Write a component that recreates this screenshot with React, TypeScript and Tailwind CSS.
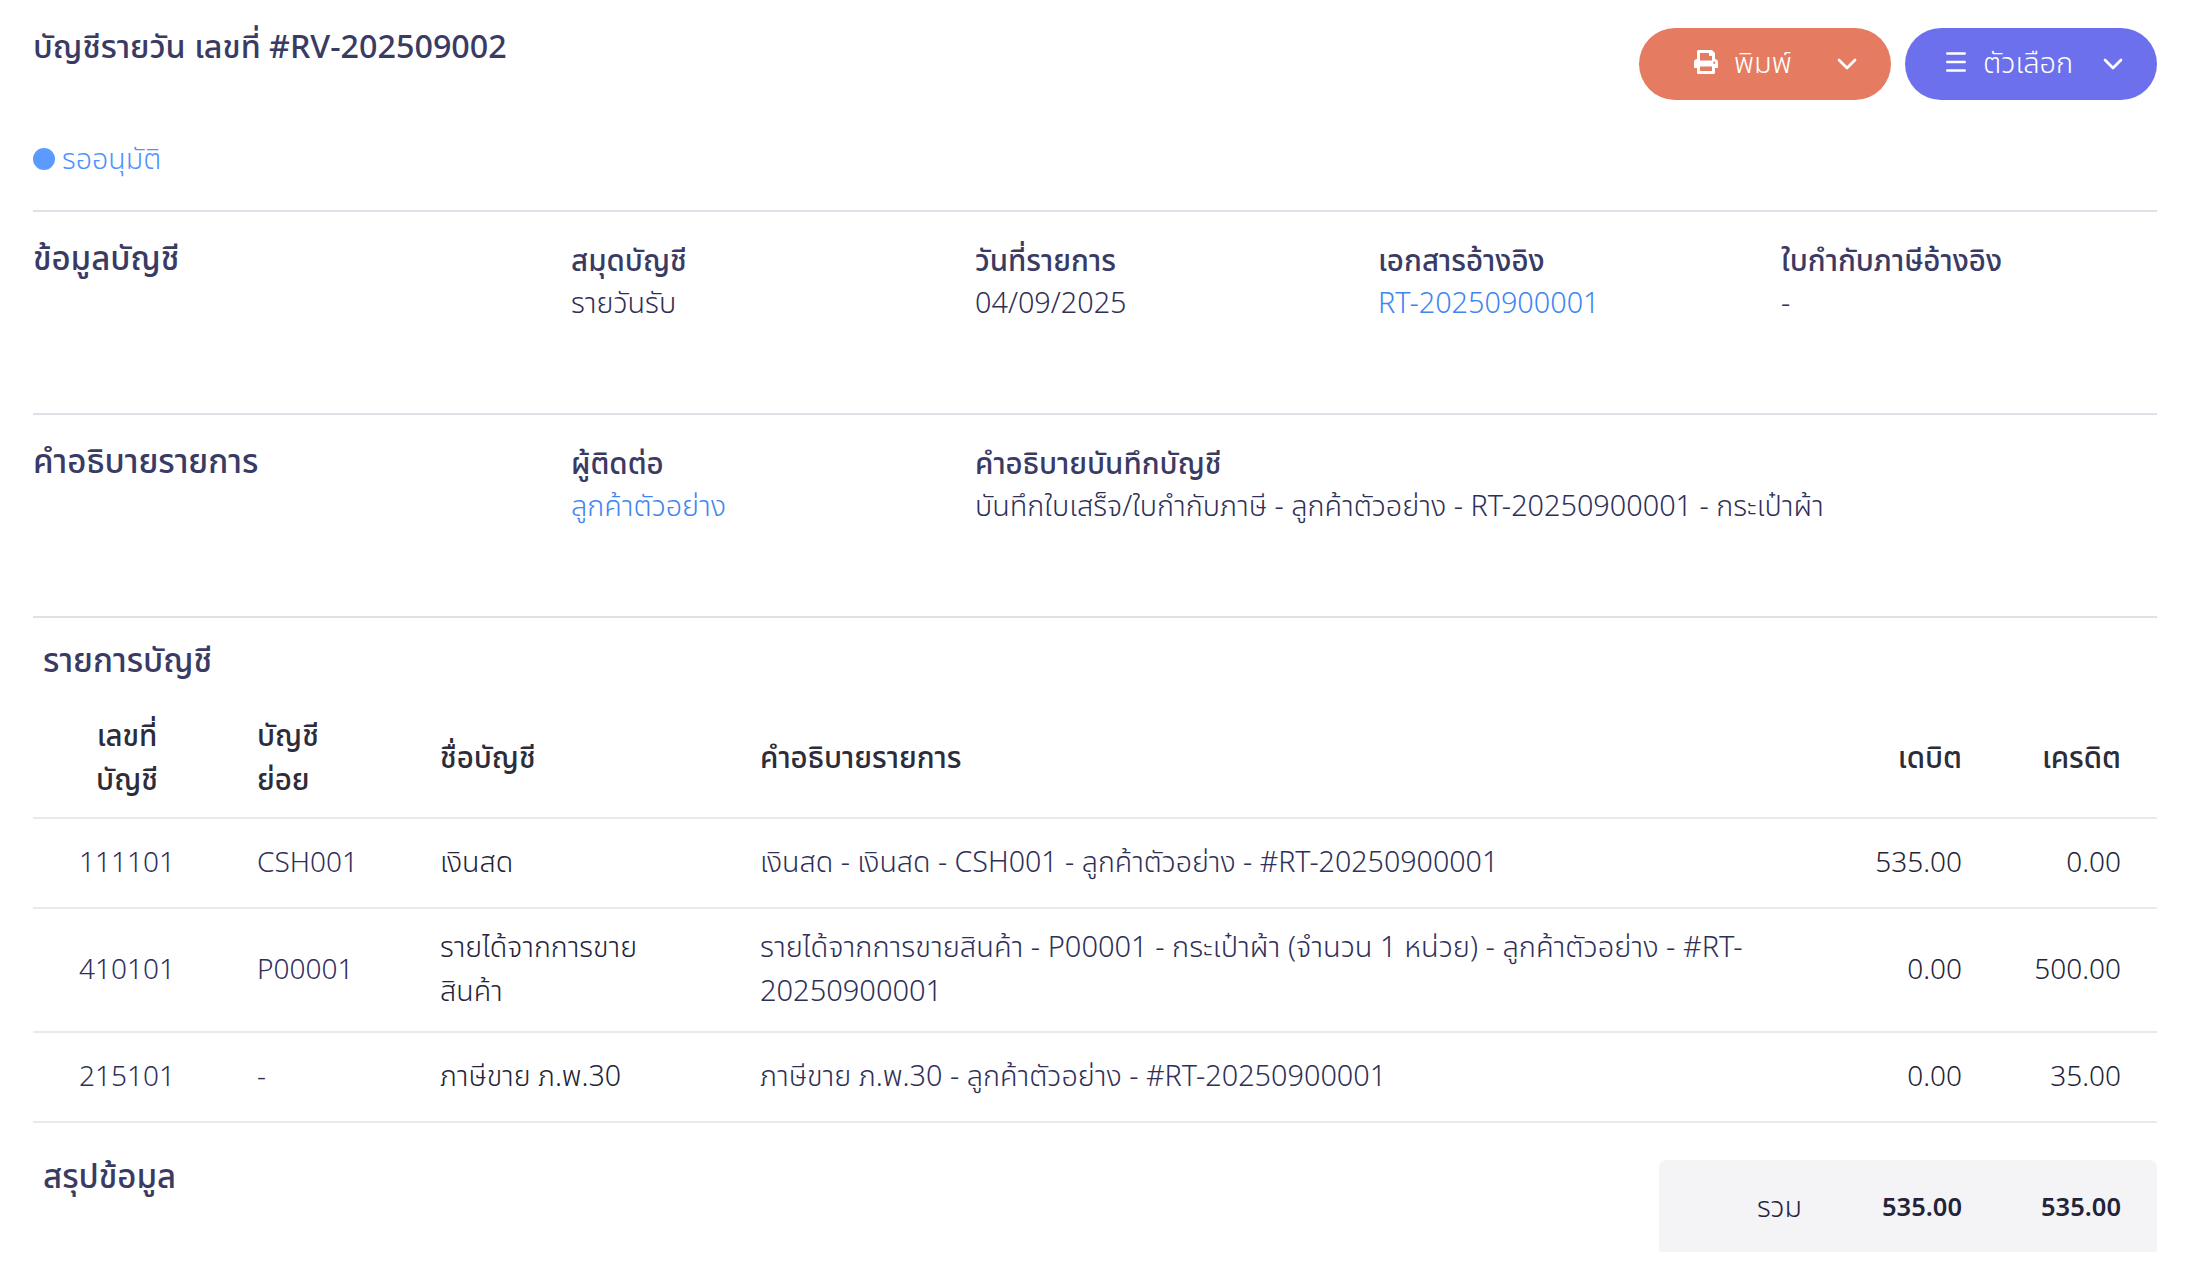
import React from "react";
import { ChevronDown } from "lucide-react";
import { FaPrint } from "react-icons/fa";

const rows = [
  { no: "111101", sub: "CSH001", name: "เงินสด", desc: "เงินสด - เงินสด - CSH001 - ลูกค้าตัวอย่าง - #RT-20250900001", size: "text-[28.6px]", dr: "535.00", cr: "0.00" },
  { no: "410101", sub: "P00001", name: "รายได้จากการขายสินค้า", desc: "รายได้จากการขายสินค้า - P00001 - กระเป๋าผ้า (จำนวน 1 หน่วย) - ลูกค้าตัวอย่าง - #RT-20250900001", size: "text-[29px]", dr: "0.00", cr: "500.00" },
  { no: "215101", sub: "-", name: "ภาษีขาย ภ.พ.30", desc: "ภาษีขาย ภ.พ.30 - ลูกค้าตัวอย่าง - #RT-20250900001", size: "text-[28.8px]", dr: "0.00", cr: "35.00" },
];

function Field({ label, value, link }: { label: string; value: string; link?: boolean }) {
  return (
    <div>
      <div className="text-[29.5px] leading-[42px] font-medium text-[#3a3b64] pt-[1px]">{label}</div>
      <div className={`text-[28.8px] leading-[42px] font-light ${link ? "text-[#3f86f0]" : "text-[#2f3058]"}`}>{value}</div>
    </div>
  );
}

export default function App() {
  return (
    <div className="bg-white min-h-[1278px] pl-[33px] pr-[31px] pt-[28px] font-['Noto_Sans','Noto_Sans_Thai',sans-serif] text-[#3a3b64]">
      <header className="flex justify-between h-[103px]">
        <h1 className="text-[32.3px] leading-[34px] font-medium">บัญชีรายวัน เลขที่ #RV-202509002</h1>
        <div className="flex gap-[14px]">
          <button className="w-[252px] h-[72px] rounded-[36px] bg-[#e57c61] text-white flex items-center justify-between pl-[55px] pr-[28px]">
            <span className="flex items-center gap-[16px] text-[29px] font-light mb-[4px]"><FaPrint className="text-[24px]" />พิมพ์</span>
            <ChevronDown size={32} strokeWidth={2} />
          </button>
          <button className="w-[252px] h-[72px] rounded-[36px] bg-[#6c70ec] text-white flex items-center justify-between pl-[41px] pr-[28px]">
            <span className="flex items-center gap-[17px] text-[29px] font-light mb-[4px]">
              <svg width="20" height="20" viewBox="0 0 20 20" fill="none" stroke="currentColor" strokeWidth="2.6" strokeLinecap="round">
                <path d="M1.3 1.5h17.4M1.3 10h17.4M1.3 18.5h17.4" />
              </svg>
              ตัวเลือก
            </span>
            <ChevronDown size={32} strokeWidth={2} />
          </button>
        </div>
      </header>

      <div className="flex items-center gap-[7px] h-[54px] mb-[25px] text-[28.6px] font-light text-[#4f92ff]">
        <span className="w-[22px] h-[22px] rounded-full bg-[#5b9bff] mt-[1px]" />
        รออนุมัติ
      </div>

      <section className="border-t-2 border-[#e0e0e8] h-[203px] grid grid-cols-[538px_404px_403px_403px_1fr] pt-[26px]">
        <h2 className="text-[33px] leading-[44px] font-medium -mt-[2px]">ข้อมูลบัญชี</h2>
        <Field label="สมุดบัญชี" value="รายวันรับ" />
        <Field label="วันที่รายการ" value="04/09/2025" />
        <Field label="เอกสารอ้างอิง" value="RT-20250900001" link />
        <Field label="ใบกำกับภาษีอ้างอิง" value="-" />
      </section>

      <section className="border-t-2 border-[#e0e0e8] h-[203px] grid grid-cols-[538px_404px_1fr] pt-[26px]">
        <h2 className="text-[33px] leading-[44px] font-medium -mt-[2px]">คำอธิบายรายการ</h2>
        <Field label="ผู้ติดต่อ" value="ลูกค้าตัวอย่าง" link />
        <Field label="คำอธิบายบันทึกบัญชี" value="บันทึกใบเสร็จ/ใบกำกับภาษี - ลูกค้าตัวอย่าง - RT-20250900001 - กระเป๋าผ้า" />
      </section>

      <section className="border-t-2 border-[#e0e0e8]">
        <h2 className="text-[33px] leading-[44px] font-medium pl-[10px] pt-[20px]">รายการบัญชี</h2>
        <table className="w-full table-fixed border-collapse text-[28.6px] leading-[43.5px] font-light text-[#2f3058] mt-[14px]">
          <colgroup>
            <col className="w-[188px]" />
            <col className="w-[183px]" />
            <col className="w-[320px]" />
            <col />
            <col className="w-[160px]" />
            <col className="w-[159px]" />
          </colgroup>
          <thead>
            <tr className="border-b-2 border-[#e8e8ee] text-[#2c2c3a] h-[122px]">
              <th className="font-medium text-[29.5px] text-center px-[36px]">เลขที่<br />บัญชี</th>
              <th className="font-medium text-[29.5px] text-left pl-[36px]">บัญชี<br />ย่อย</th>
              <th className="font-medium text-[29.5px] text-left pl-[36px]">ชื่อบัญชี</th>
              <th className="font-medium text-[29.5px] text-left pl-[36px]">คำอธิบายรายการ</th>
              <th className="font-medium text-[29.5px] text-right pr-[36px]">เดบิต</th>
              <th className="font-medium text-[29.5px] text-right pr-[36px]">เครดิต</th>
            </tr>
          </thead>
          <tbody>
            {rows.map((r) => (
              <tr key={r.no} className="border-b-2 border-[#e8e8ee] h-[90px]">
                <td className="text-center text-[28px] pb-[3px]">{r.no}</td>
                <td className="pl-[36px] text-[28px] pb-[3px]">{r.sub}</td>
                <td className="px-[36px] pt-[15px] pb-[20px] text-[#23243a]">{r.name}</td>
                <td className={`px-[36px] pt-[15px] pb-[20px] ${r.size}`}>{r.desc}</td>
                <td className="text-right pr-[36px] text-[28px] pb-[3px] text-[#23243a]">{r.dr}</td>
                <td className="text-right pr-[36px] text-[28px] pb-[3px] text-[#23243a]">{r.cr}</td>
              </tr>
            ))}
          </tbody>
        </table>
      </section>

      <section className="flex justify-between items-start pt-[37px]">
        <h2 className="text-[33px] leading-[32px] font-medium pl-[10px]">สรุปข้อมูล</h2>
        <div className="w-[498px] h-[92px] bg-[#f4f4f7] rounded-t-[8px] flex items-center justify-end text-[#23243a]">
          <span className="text-[28.6px] font-light mr-[36px]">รวม</span>
          <span className="w-[160px] text-right pr-[36px] text-[25.5px] font-semibold">535.00</span>
          <span className="w-[159px] text-right pr-[36px] text-[25.5px] font-semibold">535.00</span>
        </div>
      </section>
    </div>
  );
}
